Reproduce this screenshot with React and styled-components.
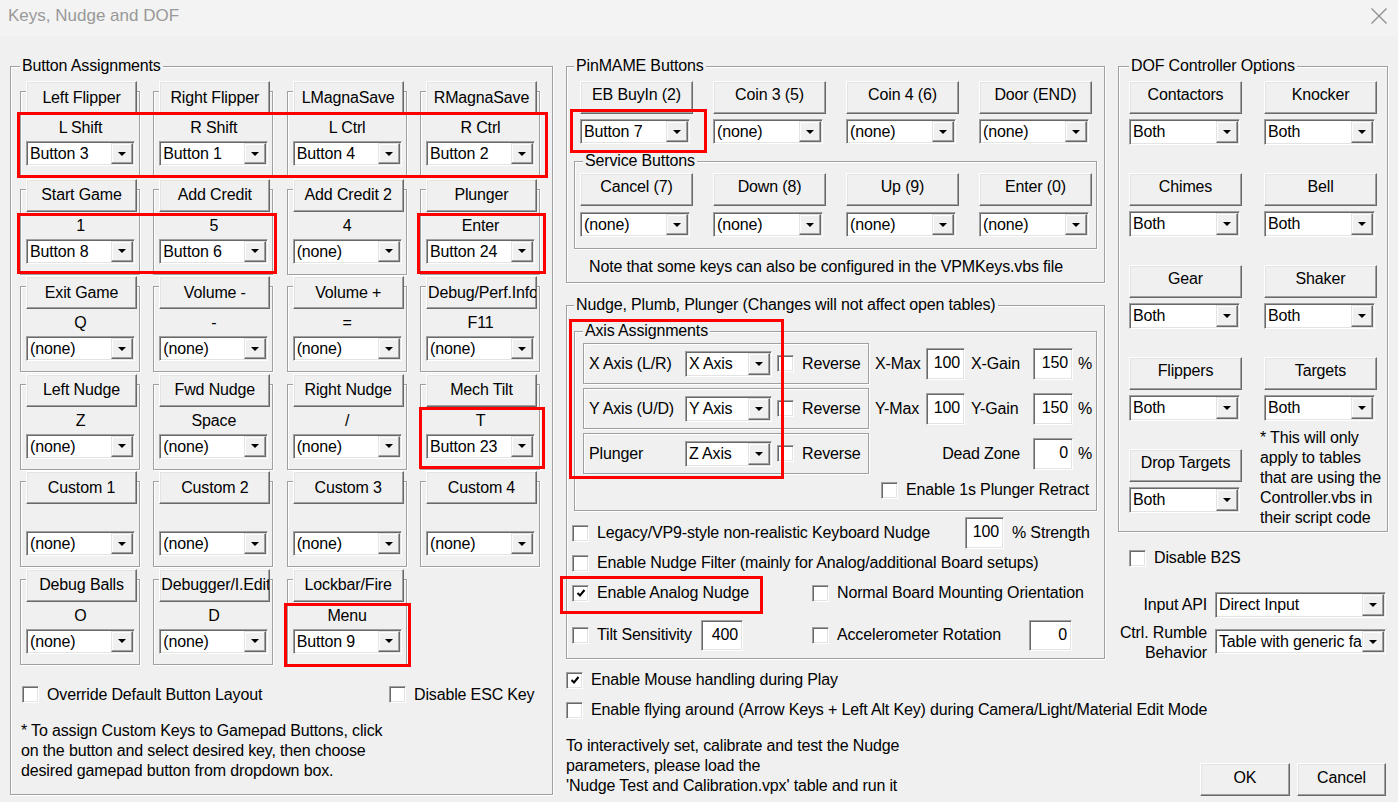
import styled, { createGlobalStyle } from "styled-components";

const GlobalStyle = createGlobalStyle`
  html, body {
    margin: 0;
    padding: 0;
    background: #f0f0f0;
  }
  * {
    box-sizing: border-box;
  }
`;

const Window = styled.div`
  position: relative;
  width: 1398px;
  height: 802px;
  overflow: hidden;
  background: #f0f0f0;
  color: #000;
  font-family: "Liberation Sans", Arial, sans-serif;
  font-size: 16px;
  letter-spacing: -0.15px;
`;

const TitleBar = styled.div`
  display: flex;
  justify-content: space-between;
  align-items: center;
  height: 36px;
  padding: 0 11px 4px 8px;
  background: #f3f3f3;
  letter-spacing: 0;
`;

const Title = styled.span`
  font-size: 17px;
  color: #999;
`;

const Body = styled.div`
  display: grid;
  grid-template-columns: 543px 539px 270px;
  column-gap: 13px;
  align-items: start;
  height: 766px;
  padding: 21px 0 9px 10px;
`;

/* ---------- basic win32 controls ---------- */

const Group = styled.fieldset`
  margin: 0;
  min-width: 0;
  border: 1px solid #a0a0a0;
  box-shadow: inset 1px 1px 0 #fff, 1px 1px 0 #fff;
`;

const Legend = styled.legend`
  position: relative;
  padding: 0 2px;
  margin-left: ${p => p.$ml || 0}px;
  line-height: 18px;
  background: #f0f0f0;
`;

const Btn = styled.button`
  display: block;
  width: ${p => p.$w || 111}px;
  height: 33px;
  margin: 0;
  padding: 0 1px ${p => p.$up || 0}px;
  font: inherit;
  letter-spacing: inherit;
  color: #000;
  text-align: center;
  white-space: nowrap;
  overflow: hidden;
  background: #f0f0f0;
  border: 1px solid;
  border-color: #fff #696969 #696969 #fff;
  box-shadow: inset -1px -1px 0 #a0a0a0, inset 1px 1px 0 #e3e3e3;
`;

const Combo = styled.div`
  display: flex;
  align-items: stretch;
  width: ${p => p.$w || 109}px;
  height: ${p => p.$h || 25}px;
  padding: 1px;
  background: #fff;
  border: 1px solid;
  border-color: #a0a0a0 #fff #fff #a0a0a0;
  box-shadow: inset 1px 1px 0 #696969, inset -1px -1px 0 #e3e3e3;
`;

const ComboText = styled.span`
  flex: 1;
  min-width: 0;
  padding-left: 2px;
  line-height: ${p => p.$lh || 21}px;
  white-space: nowrap;
  overflow: hidden;
`;

const DropBtn = styled.span`
  display: flex;
  justify-content: center;
  align-items: center;
  width: 22px;
  background: #f0f0f0;
  border: 1px solid;
  border-color: #e3e3e3 #696969 #696969 #e3e3e3;
  box-shadow: inset -1px -1px 0 #a0a0a0, inset 1px 1px 0 #fff;

  &::after {
    content: "";
    border-left: 4px solid transparent;
    border-right: 4px solid transparent;
    border-top: 4px solid #000;
  }
`;

const Box = styled.span`
  display: inline-flex;
  justify-content: center;
  align-items: center;
  flex: none;
  width: 17px;
  height: 17px;
  background: #fff;
  border: 1px solid;
  border-color: #a0a0a0 #fff #fff #a0a0a0;
  box-shadow: inset 1px 1px 0 #696969, inset -1px -1px 0 #e3e3e3;
`;

const CheckItem = styled.label`
  display: flex;
  align-items: center;
  gap: 8px;
  height: 20px;
  white-space: nowrap;
`;

const NumBox = styled.div`
  width: ${p => p.$w || 39}px;
  height: ${p => p.$h || 32}px;
  padding: 0 4px;
  text-align: right;
  line-height: ${p => (p.$h || 32) - 4}px;
  background: #fff;
  border: 1px solid;
  border-color: #a0a0a0 #fff #fff #a0a0a0;
  box-shadow: inset 1px 1px 0 #696969, inset -1px -1px 0 #e3e3e3;
`;

const Highlight = styled.div`
  position: absolute;
  left: ${p => p.$x}px;
  top: ${p => p.$y}px;
  width: ${p => p.$w}px;
  height: ${p => p.$h}px;
  border: 3px solid #ff0000;
  pointer-events: none;
`;

function Dropdown({ value, w, h, lh }) {
  return (
    <Combo $w={w} $h={h}>
      <ComboText $lh={lh}>{value}</ComboText>
      <DropBtn />
    </Combo>
  );
}

function Check({ label, checked }) {
  return (
    <CheckItem>
      <Box>
        {checked && (
          <svg width="10" height="10" viewBox="0 0 10 10">
            <path d="M1.5 5 L4 7.5 L8.5 2" fill="none" stroke="#000" strokeWidth="2" />
          </svg>
        )}
      </Box>
      {label}
    </CheckItem>
  );
}

/* ---------- button assignments ---------- */

const AssignGroup = styled(Group)`
  padding: 6px 9px 13px 9px;
`;

const KeyGrid = styled.div`
  display: grid;
  grid-template-columns: repeat(4, 120px);
  column-gap: 13.33px;
  row-gap: 1.5px;
`;

const Cell = styled.div`
  display: flex;
  flex-direction: column;
  margin-top: 10px;
  padding: 0 4px 10px 5px;
  border: 1px solid #a0a0a0;
  box-shadow: inset 1px 1px 0 #fff, 1px 1px 0 #fff;

  & > button {
    margin-top: -11px;
  }
`;

const KeyLabel = styled.div`
  height: 20px;
  margin: 4px 0 3px;
  line-height: 20px;
  text-align: center;
`;

const AssignOptions = styled.div`
  display: grid;
  grid-template-columns: 367px auto;
  margin-top: 20px;
  padding-left: 2px;
`;

const AssignNote = styled.p`
  margin: 16px 0 0;
  padding-left: 1px;
  line-height: 20px;
`;

/* ---------- pinmame ---------- */

const PinGroup = styled(Group)`
  padding: 6px 7px 5px 7px;
`;

const PinGrid = styled.div`
  display: grid;
  grid-template-columns: repeat(4, 113px);
  column-gap: 20px;
  row-gap: ${p => p.$gap}px;
  margin-left: ${p => p.$ml || 0}px;
`;

const ServiceGroup = styled(Group)`
  margin-top: 8px;
  padding: 3px 5px 11px 5px;
`;

const PinNote = styled.div`
  margin-top: 8px;
  padding-left: 15px;
  line-height: 20px;
`;

/* ---------- nudge ---------- */

const NudgeGroup = styled(Group)`
  margin-top: 13px;
  padding: 8px 7px 7px 5px;
`;

const AxisGroup = styled(Group)`
  margin-left: 2px;
  padding: 3px 8px 8px 8px;
`;

const AxisGrid = styled.div`
  display: grid;
  grid-template-columns: 286px 1fr;
  grid-template-rows: 41px 41px 41px 24px;
  row-gap: 4px;
`;

const AxisRow = styled.div`
  display: flex;
  align-items: center;
  padding-left: 5px;
  border: 1px solid #a0a0a0;
  box-shadow: inset 1px 1px 0 #fff, 1px 1px 0 #fff;
`;

const AxisName = styled.span`
  width: 96px;
  white-space: nowrap;
`;

const Reverse = styled.span`
  display: flex;
  align-items: center;
  gap: 8px;
  margin-left: 5px;
`;

const Fields = styled.div`
  display: flex;
  align-items: center;
  padding-left: 6px;
`;

const FieldLabel = styled.span`
  width: ${p => p.$w}px;
  margin-left: ${p => p.$ml || 0}px;
  padding-right: ${p => (p.$right ? 13 : 0)}px;
  text-align: ${p => (p.$right ? "right" : "left")};
  white-space: nowrap;
`;

const Percent = styled.span`
  margin-left: 5px;
`;

const RetractRow = styled.div`
  grid-column: 2;
  display: flex;
  align-items: center;
  padding-left: 12px;
`;

const NudgeRow = styled.div`
  display: grid;
  grid-template-columns: ${p => p.$cols || "1fr"};
  align-items: center;
  height: ${p => p.$h || 20}px;
  margin-top: ${p => p.$mt}px;
`;

const InlineField = styled.div`
  display: grid;
  grid-template-columns: ${p => p.$cols};
  align-items: center;
`;

const Strength = styled.span`
  margin-left: 8px;
`;

const PlainRow = styled.div`
  margin-top: ${p => p.$mt}px;
`;

const BottomNote = styled.p`
  margin: 16px 0 0;
  line-height: 20px;
`;

/* ---------- DOF ---------- */

const RightColumn = styled.div`
  display: flex;
  flex-direction: column;
  align-self: stretch;
`;

const DofGroup = styled(Group)`
  padding: 6px 10px 3px 10px;
`;

const DofGrid = styled.div`
  display: grid;
  grid-template-columns: 113px 113px;
  column-gap: 22px;
  row-gap: 28px;
`;

const DofItem = styled.div`
  display: flex;
  flex-direction: column;
  gap: 5px;
`;

const DofNote = styled.div`
  grid-column: 2;
  margin: -21px 0 0 -4px;
  line-height: 20px;
  white-space: nowrap;
`;

const B2SRow = styled.div`
  margin-top: 16px;
  padding-left: 11px;
`;

const SettingRow = styled.div`
  display: grid;
  grid-template-columns: 89px 171px;
  column-gap: 8px;
  align-items: ${p => (p.$top ? "start" : "center")};
  margin-top: ${p => p.$mt}px;

  & > div:last-child {
    margin-top: ${p => (p.$top ? 6 : 0)}px;
  }
`;

const SettingLabel = styled.span`
  text-align: right;
  line-height: 20px;
  white-space: nowrap;
`;

const DialogButtons = styled.div`
  display: flex;
  justify-content: flex-end;
  gap: 7px;
  margin-top: auto;
  padding-right: 2px;
`;

/* ---------- data ---------- */

const keyRows = [
  [["Left Flipper", "L Shift", "Button 3"], ["Right Flipper", "R Shift", "Button 1"], ["LMagnaSave", "L Ctrl", "Button 4"], ["RMagnaSave", "R Ctrl", "Button 2"]],
  [["Start Game", "1", "Button 8"], ["Add Credit", "5", "Button 6"], ["Add Credit 2", "4", "(none)"], ["Plunger", "Enter", "Button 24"]],
  [["Exit Game", "Q", "(none)"], ["Volume -", "-", "(none)"], ["Volume +", "=", "(none)"], ["Debug/Perf.Info", "F11", "(none)"]],
  [["Left Nudge", "Z", "(none)"], ["Fwd Nudge", "Space", "(none)"], ["Right Nudge", "/", "(none)"], ["Mech Tilt", "T", "Button 23"]],
  [["Custom 1", "", "(none)"], ["Custom 2", "", "(none)"], ["Custom 3", "", "(none)"], ["Custom 4", "", "(none)"]],
  [["Debug Balls", "O", "(none)"], ["Debugger/I.Edit", "D", "(none)"], ["Lockbar/Fire", "Menu", "Button 9"]],
];

const pinButtons = [["EB BuyIn (2)", "Button 7"], ["Coin 3 (5)", "(none)"], ["Coin 4 (6)", "(none)"], ["Door (END)", "(none)"]];
const serviceButtons = ["Cancel (7)", "Down (8)", "Up (9)", "Enter (0)"];

const axes = [
  { name: "X Axis (L/R)", value: "X Axis", max: "X-Max", gain: "X-Gain" },
  { name: "Y Axis (U/D)", value: "Y Axis", max: "Y-Max", gain: "Y-Gain" },
  { name: "Plunger", value: "Z Axis" },
];

const dofOutputs = ["Contactors", "Knocker", "Chimes", "Bell", "Gear", "Shaker", "Flippers", "Targets", "Drop Targets"];

const highlights = [
  [17, 112, 531, 66],
  [17, 213, 260, 61],
  [417, 213, 129, 61],
  [419, 407, 126, 62],
  [284, 603, 127, 64],
  [570, 109, 137, 44],
  [569, 319, 215, 160],
  [560, 576, 203, 38],
];

export default function App() {
  return (
    <Window>
      <GlobalStyle />
      <TitleBar>
        <Title>Keys, Nudge and DOF</Title>
        <svg width="16" height="16" viewBox="0 0 16 16">
          <path d="M0.5 0.5 L15.5 15.5 M15.5 0.5 L0.5 15.5" stroke="#8a8a8a" strokeWidth="1.2" />
        </svg>
      </TitleBar>

      <Body>
        <AssignGroup>
          <Legend>Button Assignments</Legend>
          <KeyGrid>
            {keyRows.flat().map(([action, key, pad]) => (
              <Cell key={action}>
                <Btn>{action}</Btn>
                <KeyLabel>{key}</KeyLabel>
                <Dropdown value={pad} />
              </Cell>
            ))}
          </KeyGrid>
          <AssignOptions>
            <Check label="Override Default Button Layout" />
            <Check label="Disable ESC Key" />
          </AssignOptions>
          <AssignNote>
            * To assign Custom Keys to Gamepad Buttons, click<br />
            on the button and select desired key, then choose<br />
            desired gamepad button from dropdown box.
          </AssignNote>
        </AssignGroup>

        <div>
          <PinGroup>
            <Legend>PinMAME Buttons</Legend>
            <PinGrid $gap={5} $ml={6}>
              {pinButtons.map(([name]) => (
                <Btn key={name} $w={113} $up={6}>{name}</Btn>
              ))}
              {pinButtons.map(([name, value]) => (
                <Dropdown key={name} value={value} w={110} />
              ))}
            </PinGrid>
            <ServiceGroup>
              <Legend $ml={3}>Service Buttons</Legend>
              <PinGrid $gap={6}>
                {serviceButtons.map(name => (
                  <Btn key={name} $w={113} $up={6}>{name}</Btn>
                ))}
                {serviceButtons.map(name => (
                  <Dropdown key={name} value="(none)" w={110} />
                ))}
              </PinGrid>
            </ServiceGroup>
            <PinNote>Note that some keys can also be configured in the VPMKeys.vbs file</PinNote>
          </PinGroup>

          <NudgeGroup>
            <Legend $ml={2}>Nudge, Plumb, Plunger (Changes will not affect open tables)</Legend>
            <AxisGroup>
              <Legend>Axis Assignments</Legend>
              <AxisGrid>
                {axes.map(axis => [
                  <AxisRow key={axis.name}>
                    <AxisName>{axis.name}</AxisName>
                    <Dropdown value={axis.value} w={87} h={26} lh={22} />
                    <Reverse>
                      <Box />
                      Reverse
                    </Reverse>
                  </AxisRow>,
                  <Fields key={axis.name + "-f"}>
                    {axis.max ? (
                      <>
                        <FieldLabel $w={51}>{axis.max}</FieldLabel>
                        <NumBox>100</NumBox>
                        <FieldLabel $w={62} $ml={6}>{axis.gain}</FieldLabel>
                      </>
                    ) : (
                      <FieldLabel $w={158} $right>Dead Zone</FieldLabel>
                    )}
                    <NumBox $w={40}>{axis.max ? "150" : "0"}</NumBox>
                    <Percent>%</Percent>
                  </Fields>,
                ])}
                <RetractRow>
                  <Check label="Enable 1s Plunger Retract" />
                </RetractRow>
              </AxisGrid>
            </AxisGroup>

            <NudgeRow $cols="393px 39px auto" $h={32} $mt={6}>
              <Check label="Legacy/VP9-style non-realistic Keyboard Nudge" />
              <NumBox>100</NumBox>
              <Strength>% Strength</Strength>
            </NudgeRow>
            <NudgeRow $mt={4}>
              <Check label="Enable Nudge Filter (mainly for Analog/additional Board setups)" />
            </NudgeRow>
            <NudgeRow $cols="240px auto" $mt={10}>
              <Check label="Enable Analog Nudge" checked />
              <Check label="Normal Board Mounting Orientation" />
            </NudgeRow>
            <NudgeRow $cols="240px auto" $h={32} $mt={16}>
              <InlineField $cols="129px 42px">
                <Check label="Tilt Sensitivity" />
                <NumBox $w={42} $h={31}>400</NumBox>
              </InlineField>
              <InlineField $cols="217px 43px">
                <Check label="Accelerometer Rotation" />
                <NumBox $w={43} $h={31}>0</NumBox>
              </InlineField>
            </NudgeRow>
          </NudgeGroup>

          <PlainRow $mt={11}>
            <Check label="Enable Mouse handling during Play" checked />
          </PlainRow>
          <PlainRow $mt={10}>
            <Check label="Enable flying around (Arrow Keys + Left Alt Key) during Camera/Light/Material Edit Mode" />
          </PlainRow>
          <BottomNote>
            To interactively set, calibrate and test the Nudge<br />
            parameters, please load the<br />
            'Nudge Test and Calibration.vpx' table and run it
          </BottomNote>
        </div>

        <RightColumn>
          <DofGroup>
            <Legend>DOF Controller Options</Legend>
            <DofGrid>
              {dofOutputs.map(name => (
                <DofItem key={name}>
                  <Btn $w={113} $up={6}>{name}</Btn>
                  <Dropdown value="Both" w={111} h={26} lh={22} />
                </DofItem>
              ))}
              <DofNote>
                * This will only<br />
                apply to tables<br />
                that are using the<br />
                Controller.vbs in<br />
                their script code
              </DofNote>
            </DofGrid>
          </DofGroup>

          <B2SRow>
            <Check label="Disable B2S" />
          </B2SRow>
          <SettingRow $mt={24}>
            <SettingLabel>Input API</SettingLabel>
            <Dropdown value="Direct Input" w={171} h={26} lh={22} />
          </SettingRow>
          <SettingRow $mt={5} $top>
            <SettingLabel>
              Ctrl. Rumble<br />
              Behavior
            </SettingLabel>
            <Dropdown value="Table with generic fallback" w={171} h={25} />
          </SettingRow>

          <DialogButtons>
            <Btn $w={90} $up={3}>OK</Btn>
            <Btn $w={89} $up={3}>Cancel</Btn>
          </DialogButtons>
        </RightColumn>
      </Body>

      {highlights.map(([x, y, w, h]) => (
        <Highlight key={`${x}-${y}`} $x={x} $y={y} $w={w} $h={h} />
      ))}
    </Window>
  );
}
